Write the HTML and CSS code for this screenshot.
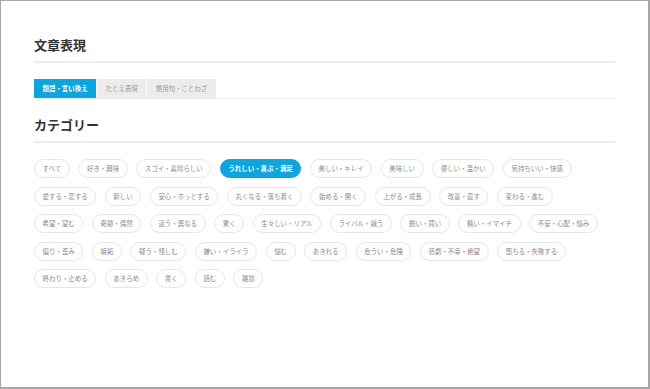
FILE: index.html
```html
<!DOCTYPE html>
<html lang="ja">
<head>
  <meta charset="UTF-8">
  <title>文章表現 - カテゴリー</title>
  <link rel="stylesheet" href="styles.css">
</head>
<body>
  <div class="frame">
    <section class="block">
      <h2 class="block-title">文章表現</h2>
      <ul class="tabs">
        <li class="tab active">類語・言い換え</li>
        <li class="tab">たとえ表現</li>
        <li class="tab">慣用句・ことわざ</li>
      </ul>
    </section>

    <section class="block">
      <h2 class="block-title">カテゴリー</h2>
      <ul class="tags">
        <li class="tag">すべて</li>
        <li class="tag">好き・興味</li>
        <li class="tag">スゴイ・素晴らしい</li>
        <li class="tag active">うれしい・喜ぶ・満足</li>
        <li class="tag">美しい・キレイ</li>
        <li class="tag">美味しい</li>
        <li class="tag">優しい・温かい</li>
        <li class="tag">気持ちいい・快感</li>
        <li class="tag">愛する・恋する</li>
        <li class="tag">新しい</li>
        <li class="tag">安心・ホッとする</li>
        <li class="tag">丸くなる・落ち着く</li>
        <li class="tag">始める・開く</li>
        <li class="tag">上がる・成長</li>
        <li class="tag">改善・直す</li>
        <li class="tag">変わる・進む</li>
        <li class="tag">希望・望む</li>
        <li class="tag">奇跡・偶然</li>
        <li class="tag">違う・異なる</li>
        <li class="tag">驚く</li>
        <li class="tag">生々しい・リアル</li>
        <li class="tag">ライバル・競う</li>
        <li class="tag">鋭い・賢い</li>
        <li class="tag">鈍い・イマイチ</li>
        <li class="tag">不安・心配・悩み</li>
        <li class="tag">偏り・歪み</li>
        <li class="tag">嫉妬</li>
        <li class="tag">疑う・怪しむ</li>
        <li class="tag">嫌い・イライラ</li>
        <li class="tag">悩む</li>
        <li class="tag">あきれる</li>
        <li class="tag">危うい・危険</li>
        <li class="tag">悲劇・不幸・絶望</li>
        <li class="tag">堕ちる・失敗する</li>
        <li class="tag">終わり・止める</li>
        <li class="tag">あきらめ</li>
        <li class="tag">書く</li>
        <li class="tag">読む</li>
        <li class="tag">雑談</li>
      </ul>
    </section>
  </div>
</body>
</html>
```

FILE: styles.css
```css
body {
  margin: 0;
  font-family: "Noto Sans CJK JP", "Noto Sans", sans-serif;
  background: #fff;
}

.frame {
  width: 650px;
  height: 389px;
  box-sizing: border-box;
  border: 2px solid #a6a6a6;
  border-top-width: 1px;
  border-left-width: 1px;
  padding: 0 33px;
  background: #fff;
}

ul {
  list-style: none;
  margin: 0;
  padding: 0;
}

.block-title {
  margin: 16px 0 0;
  padding-bottom: 6px;
  border-bottom: 2px solid #ececec;
  font-size: 13px;
  line-height: 20px;
  font-weight: bold;
  color: #333;
}

.block:first-child .block-title {
  margin-top: 34px;
}

.tabs {
  display: flex;
  gap: 1px;
  margin-top: 16px;
  border-bottom: 1px solid #ececec;
}

.tab {
  padding: 0 8.5px;
  line-height: 19px;
  font-size: 6.45px;
  color: #999;
  background: #ececec;
}

.tab.active {
  background: #0ea5dc;
  color: #fff;
  font-weight: bold;
}

.tags {
  display: flex;
  flex-wrap: wrap;
  margin-top: 16px;
}

.tag {
  margin: 0 8.5px 8.5px 0;
  padding: 0 7.6px;
  line-height: 17px;
  border: 1px solid #e6e6e6;
  border-radius: 10px;
  font-size: 6.45px;
  color: #8c8c8c;
}

.tag.active {
  background: #0ea5dc;
  border-color: #0ea5dc;
  color: #fff;
  font-weight: bold;
}
```
